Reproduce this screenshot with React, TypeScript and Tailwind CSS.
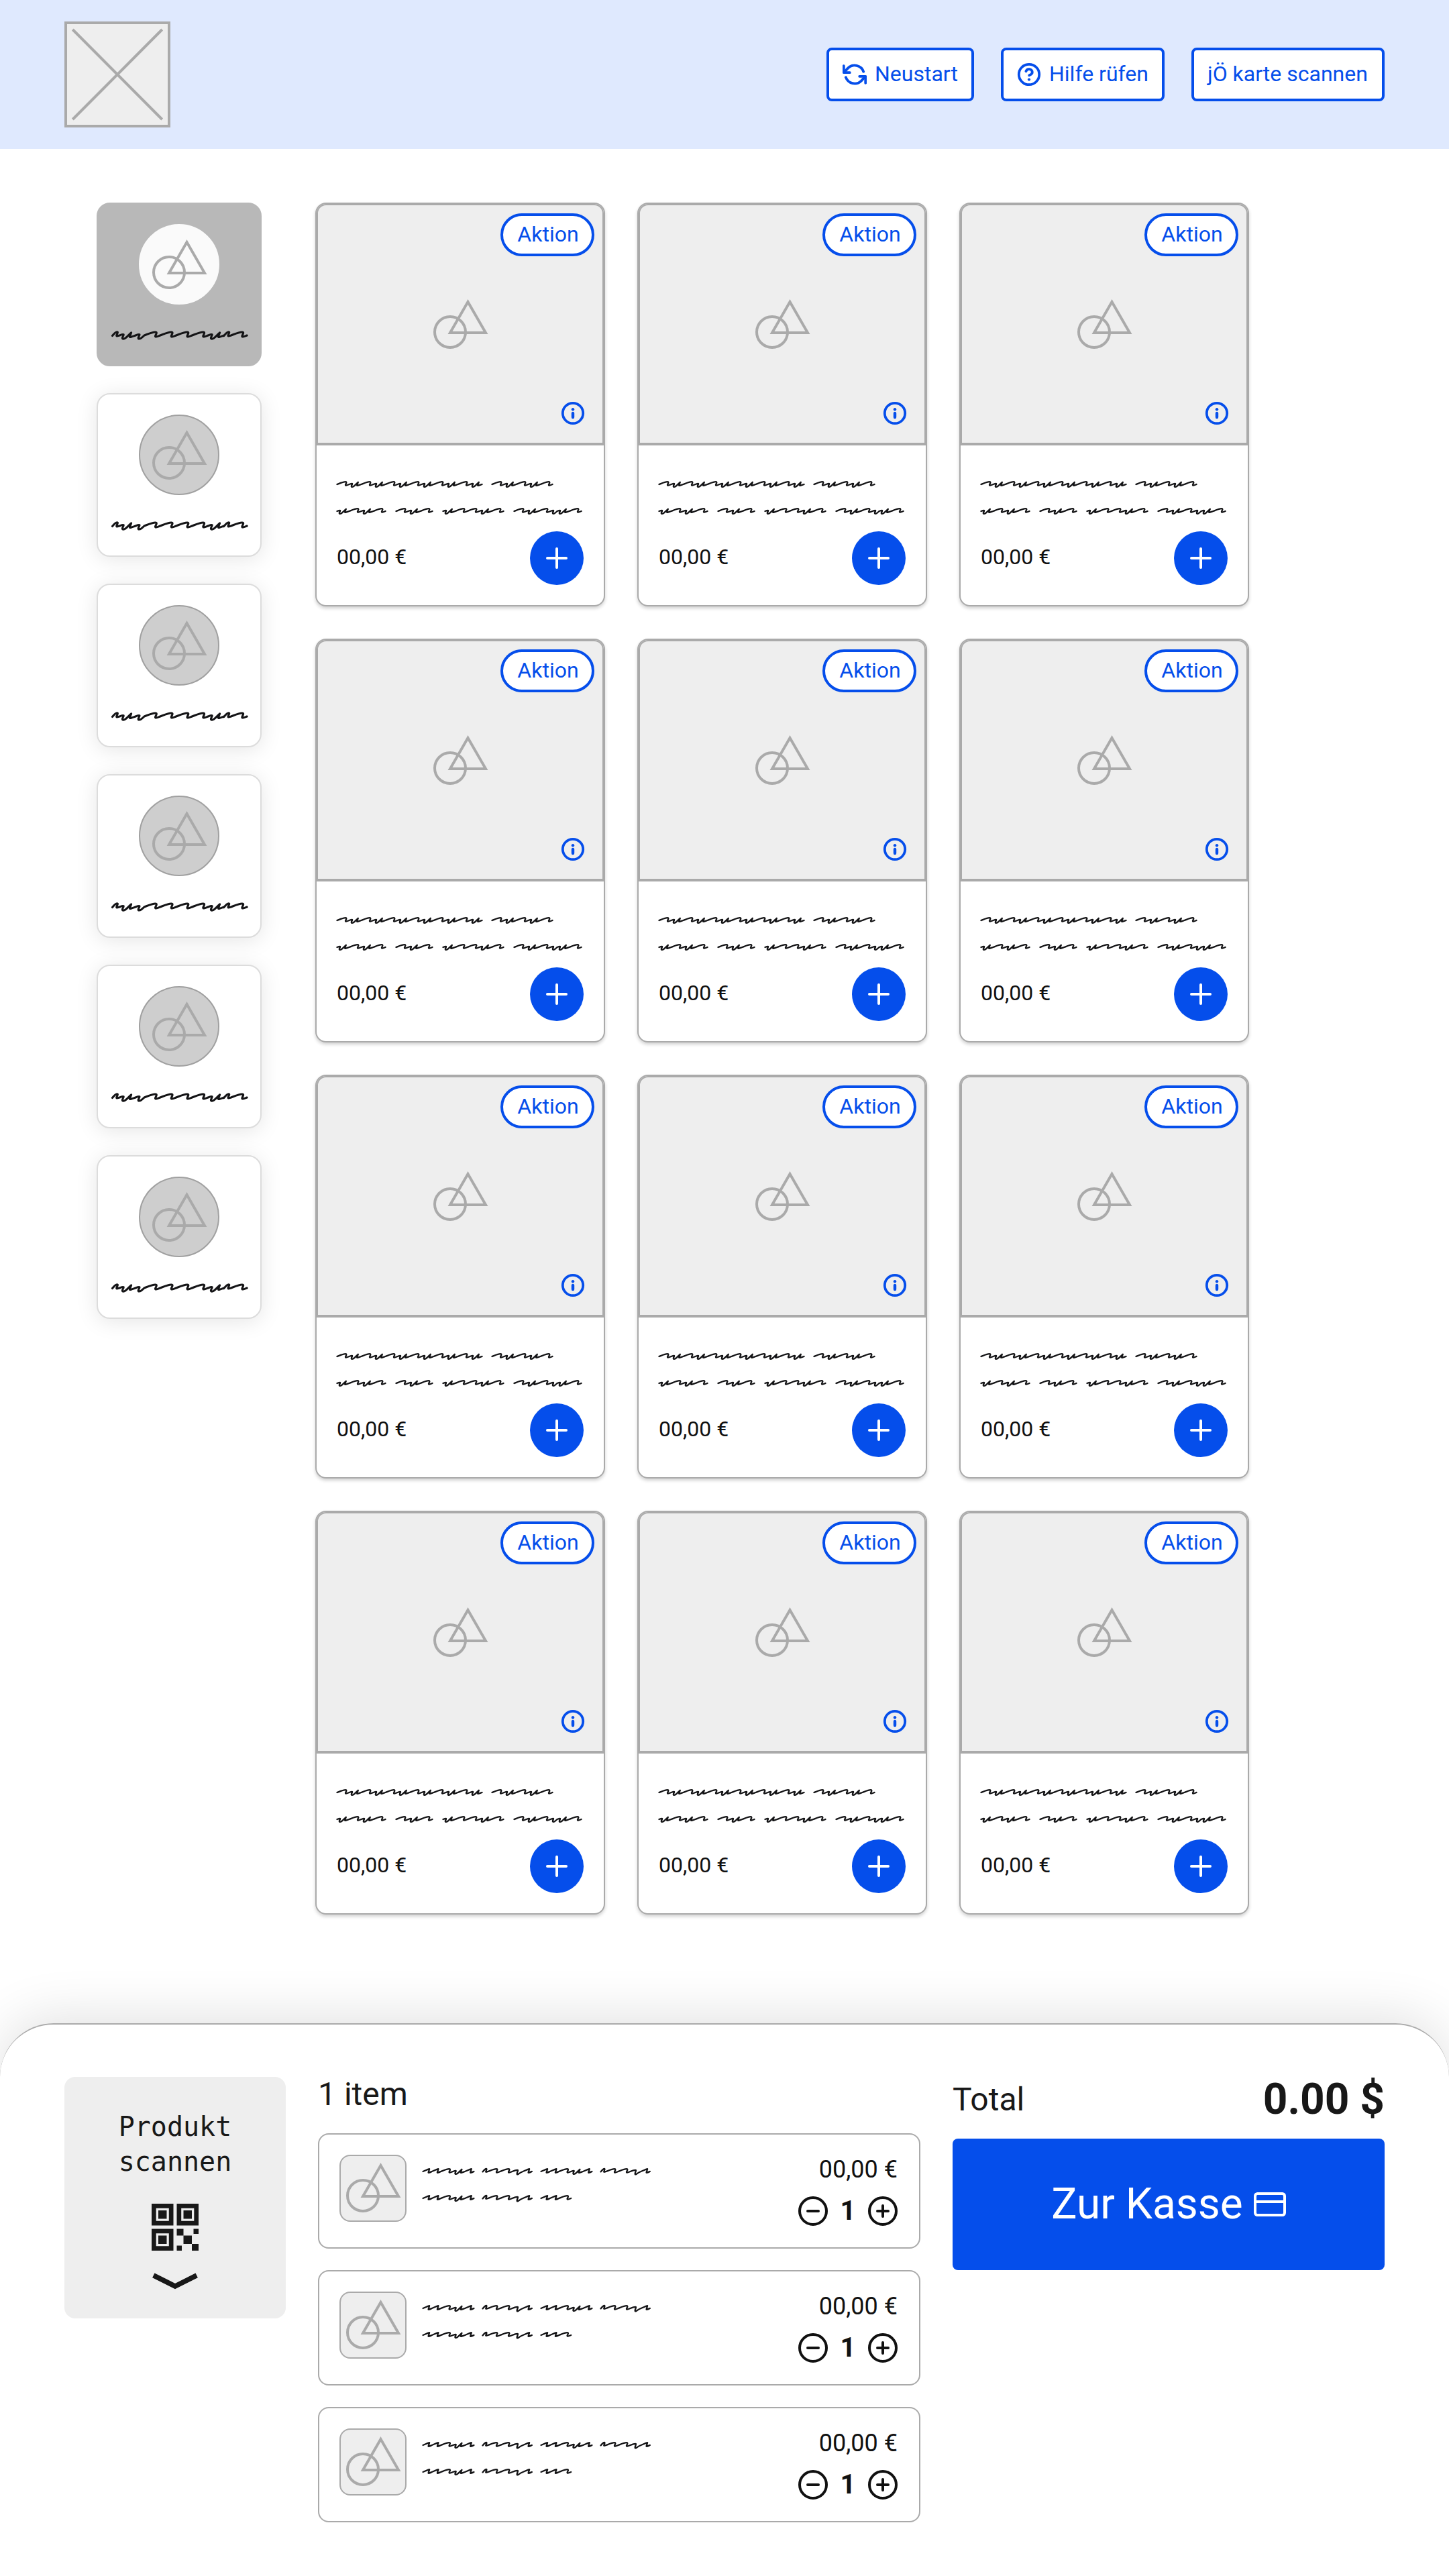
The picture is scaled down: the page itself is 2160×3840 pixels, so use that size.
import clsx from "clsx";

// Pen strokes for the placeholder handwriting, every stroke ends on the line it started from
const strokes: Record<string, string> = {
  n: "c4,-1.5 9,-3.8 12.5,-3.8 c2,0 1.4,1.6 .6,3 c-.8,1.6 -1,2.4 .3,2.3 c1.5,-.1 3,-.9 4.6,-1.5",
  u: "c2,-.7 4,-1.5 4.6,-1 c.5,.5 -1.2,2.4 -1.3,3.8 c0,1.6 1.8,1.3 3.4,.2 c2.4,-1.7 4.4,-4.2 6.6,-6.2 c-.6,1.8 -1.4,3.4 -1.6,4.6 c-.1,1.2 2,.2 6.3,-1.4",
  i: "c2,-.7 4,-1.5 4.6,-1 c.5,.5 -1.2,2.4 -1.3,3.8 c0,1.4 1.6,1.2 3.2,.2 c1.2,-.8 2.5,-2 3.5,-3",
  z: "c3,-1 6.5,-3 9.6,-3.8 c-.4,2 -1.3,3.8 -1.5,5.4 c-.1,.8 2,-.2 5.2,-1.6",
  r: "m0,.4 c1.8,-2.2 3.8,-4.6 5.4,-4.4 c1.4,.2 -.2,2.4 -.6,3.8 c-.3,1.4 .6,1 3.2,.2",
  d: "c3,-1.2 7,-2.8 8.4,-2 c.6,1 -1.2,3 -1.2,5.4 c0,1.8 1.6,1 3,-.2 c1.8,-1.4 3.6,-2.4 5.8,-3.2",
};

type Word = [number, string];

type ScribbleProps = {
  lines: Word[][];
  width: number;
  scale?: number;
  stroke?: number;
};

const Scribble = ({ lines, width, scale = 1, stroke = 2.3 }: ScribbleProps) => {
  const height = lines.length * 40;
  return (
    <svg
      width={width}
      height={height}
      viewBox={`0 0 ${width} ${height}`}
      className="shrink-0 overflow-visible"
      fill="none"
      stroke="#141416"
      strokeWidth={stroke / scale}
      strokeLinecap="round"
      strokeLinejoin="round"
    >
      {lines.map((words, row) => (
        <g key={row} transform={`translate(1.5 ${row * 40 + 20}) scale(${scale})`}>
          {words.map(([x, letters]) => (
            <path key={x} d={`M${x},0 ` + letters.split("").map((l) => strokes[l]).join(" ")} />
          ))}
        </g>
      ))}
    </svg>
  );
};

const Shapes = () => (
  <svg width="80" height="74" viewBox="0 0 80 74" className="overflow-visible" fill="none" stroke="#aaaaaa" strokeWidth="4">
    <circle cx="25" cy="49" r="23" />
    <path d="M25 50H78L51.5 4Z" />
  </svg>
);

const RefreshIcon = () => (
  <svg width="36" height="36" viewBox="0 0 36 36" fill="none" stroke="currentColor" strokeWidth="3.8" strokeLinecap="round" strokeLinejoin="round">
    <path d="M1.8 5.2V15.2H10.8" />
    <path d="M2.4 14.6L8.2 8.4A14 14 0 0 1 31.2 13.8" />
    <path d="M34.2 30.8V20.8H25.2" />
    <path d="M33.6 21.4L27.8 27.6A14 14 0 0 1 4.8 22.2" />
  </svg>
);

const HelpIcon = () => (
  <svg width="36" height="36" viewBox="0 0 36 36" fill="none" stroke="currentColor" strokeWidth="3.8" strokeLinecap="round" strokeLinejoin="round">
    <circle cx="18" cy="18" r="15.2" />
    <path d="M13.4 13.2C14.3 10.9 16.4 9.8 18.6 10.1C21 10.4 22.8 12.3 22.8 14.5C22.8 17.6 18.2 19.3 18.2 19.3" />
    <circle cx="18" cy="25.6" r="2.1" fill="currentColor" stroke="none" />
  </svg>
);

const InfoIcon = () => (
  <svg width="36" height="36" viewBox="0 0 36 36" fill="none" stroke="currentColor" strokeWidth="3.8" strokeLinecap="round">
    <circle cx="18" cy="18" r="15.2" />
    <path d="M18 18V24" strokeWidth="4.4" />
    <circle cx="18" cy="12.2" r="2.2" fill="currentColor" stroke="none" />
  </svg>
);

const QrIcon = () => (
  <svg width="70" height="70" viewBox="0 0 70 70" fill="#181818">
    {[[0, 0], [37.5, 0], [0, 37.5]].map(([x, y]) => (
      <g key={`${x}-${y}`} transform={`translate(${x} ${y})`}>
        <path fillRule="evenodd" d="M0 0H32.5V32.5H0ZM6.7 6.7V25.8H25.8V6.7Z" />
        <path d="M10 10H22.5V22.5H10Z" />
      </g>
    ))}
    <path d="M37.5 37.5H47.5V47.5H37.5ZM47.5 47.5H60V60H47.5ZM62.5 37.5H70V45H62.5ZM37.5 62.5H45V70H37.5ZM60 60H70V70H60Z" />
  </svg>
);

type HeaderButtonProps = {
  icon?: React.ReactNode;
  className?: string;
  children: React.ReactNode;
};

const HeaderButton = ({ icon, className, children }: HeaderButtonProps) => (
  <button
    className={clsx(
      "flex h-20 items-center gap-3 rounded-lg border-4 border-[#054eeb] bg-white pl-5 text-[32px] leading-10 whitespace-nowrap text-[#054eeb]",
      className
    )}
  >
    {icon}
    <span className="-mt-0.5">{children}</span>
  </button>
);

const Header = () => (
  <header className="flex h-[222px] shrink-0 items-center justify-between bg-[#dfe9fe] px-24">
    <div className="size-[158px] border-4 border-[#aaaaaa] bg-[#eeeeee]">
      <svg viewBox="0 0 150 150" stroke="#aaaaaa" strokeWidth="4">
        <path d="M8.3 8L141.7 142M141.7 8L8.3 142" />
      </svg>
    </div>
    <div className="flex gap-10">
      <HeaderButton className="w-[220px]" icon={<RefreshIcon />}>Neustart</HeaderButton>
      <HeaderButton className="w-[244px]" icon={<HelpIcon />}>Hilfe rüfen</HeaderButton>
      <HeaderButton className="w-[288px]">jÖ karte scannen</HeaderButton>
    </div>
  </header>
);

const Category = ({ active }: { active: boolean }) => (
  <div
    className={clsx(
      "flex h-[244px] w-[246px] flex-col items-center rounded-[20px] border-2 pt-[30px]",
      active ? "border-[#b8b8b8] bg-[#b8b8b8]" : "border-[#dcdcdc] bg-white shadow-[0_4px_32px_rgba(0,0,0,0.1)]"
    )}
  >
    <div
      className={clsx(
        "mb-[26px] flex size-[120px] items-center justify-center rounded-full border-2",
        active ? "border-[#fafafa] bg-[#fafafa]" : "border-[#a0a0a0] bg-[#cecece]"
      )}
    >
      <Shapes />
    </div>
    <Scribble width={202} scale={1.32} stroke={3.1} lines={[[[0, "ruinnnnurn"]]]} />
  </div>
);

const ProductCard = () => (
  <div className="h-[602px] w-[432px] rounded-2xl border-2 border-[#aaaaaa] bg-white shadow-[0_3px_5px_rgba(0,0,0,0.18)]">
    <div className="relative flex h-[360px] items-center justify-center rounded-t-[14px] border-2 border-b-4 border-[#aaaaaa] bg-[#eeeeee]">
      <Shapes />
      <span className="absolute top-3 right-3 flex h-16 w-[140px] items-center justify-center rounded-full border-4 border-[#054eeb] bg-white text-[32px] leading-10 text-[#054eeb]">
        <span className="-mt-0.5 ml-0.5">Aktion</span>
      </span>
      <span className="absolute right-[26px] bottom-[26px] text-[#054eeb]">
        <InfoIcon />
      </span>
    </div>
    <div className="px-[29px] pt-[38px]">
      <Scribble
        width={370}
        lines={[
          [[0, "nunununununu"], [231, "nunun"]],
          [[0, "unun"], [88, "nun"], [158, "unnun"], [264, "nuniun"]],
        ]}
      />
      <div className="mt-2.5 flex h-20 items-center justify-between pr-px pl-px">
        <span className="-mt-1 text-[32px] leading-10 text-[#111111]">00,00 €</span>
        <button className="flex size-20 items-center justify-center rounded-full bg-[#054eeb]">
          <svg width="32" height="32" viewBox="0 0 32 32" stroke="white" strokeWidth="4" strokeLinecap="round">
            <path d="M16 2V30M2 16H30" />
          </svg>
        </button>
      </div>
    </div>
  </div>
);

const CartItem = () => (
  <div className="flex h-[172px] rounded-2xl border-2 border-[#aaaaaa] bg-white py-[30px] pr-8 pl-[30px]">
    <div className="size-[100px] shrink-0 rounded-2xl border-2 border-[#aaaaaa] bg-[#eeeeee] pt-2.5 pl-2">
      <Shapes />
    </div>
    <div className="mt-[5px] ml-[23px] flex-1">
      <Scribble
        width={340}
        lines={[
          [[0, "zznuz"], [89, "rnndz"], [176, "zznuz"], [265, "rnndz"]],
          [[0, "zznuz"], [89, "rnndz"], [176, "zzn"]],
        ]}
      />
    </div>
    <div className="flex flex-col items-end text-[#111111]">
      <span className="text-[36px] leading-[44px]">00,00 €</span>
      <div className="mt-[18px] flex items-center">
        <svg width="44" height="44" viewBox="0 0 44 44" fill="none" stroke="currentColor" strokeWidth="4" strokeLinecap="round">
          <circle cx="22" cy="22" r="20" />
          <path d="M14 22H30" />
        </svg>
        <span className="w-[60px] text-center text-[40px] leading-[44px] font-bold">1</span>
        <svg width="44" height="44" viewBox="0 0 44 44" fill="none" stroke="currentColor" strokeWidth="4" strokeLinecap="round">
          <circle cx="22" cy="22" r="20" />
          <path d="M14 22H30M22 14V30" />
        </svg>
      </div>
    </div>
  </div>
);

const Cart = () => (
  <footer className="flex h-[824px] shrink-0 items-start gap-12 rounded-t-[80px] border-t-2 border-[#aaaaaa] bg-white px-24 pt-[78px] shadow-[0_-8px_80px_rgba(0,0,0,0.12)]">
    {/* SCAN */}
    <div className="flex h-[360px] w-[330px] flex-col items-center rounded-2xl bg-[#eeeeee] pt-12">
      <p className="text-center font-['DejaVu_Sans_Mono',monospace] text-[40px] leading-[52px]">
        Produkt
        <br />
        scannen
      </p>
      <div className="mt-[37px]">
        <QrIcon />
      </div>
      <svg className="mt-[31px]" width="70" height="28" viewBox="0 0 70 28" fill="none" stroke="#181818" strokeWidth="7.5">
        <path d="M2.8 5.8L35 22L67.2 5.8" />
      </svg>
    </div>
    {/* ITEMS */}
    <div className="w-[898px]">
      <h2 className="mb-8 text-5xl leading-[52px]">1 item</h2>
      <div className="flex flex-col gap-8">
        <CartItem />
        <CartItem />
        <CartItem />
      </div>
    </div>
    {/* CHECKOUT */}
    <div className="w-[644px]">
      <div className="mb-6 flex h-[68px] items-center justify-between">
        <span className="text-5xl leading-[68px]">Total</span>
        <span className="text-[64px] leading-[68px] font-bold">0.00 $</span>
      </div>
      <button className="flex h-[196px] w-full items-center justify-center gap-4 rounded-lg bg-[#054eeb] text-[64px] leading-[76px] text-white">
        <span>Zur Kasse</span>
        <svg width="48" height="36" viewBox="0 0 48 36" fill="none" stroke="currentColor" strokeWidth="4">
          <rect x="2" y="2" width="44" height="32" rx="3.5" />
          <path d="M2 14H46" />
        </svg>
      </button>
    </div>
  </footer>
);

const App = () => {
  return (
    <div className="flex h-[3840px] w-[2160px] flex-col overflow-hidden bg-white font-[Roboto,sans-serif] text-[#181818]">
      <Header />
      <main className="flex flex-1 items-start gap-20 pt-20 pl-36">
        <aside className="flex flex-col gap-10">
          {Array.from({ length: 6 }, (_, i) => (
            <Category key={i} active={i === 0} />
          ))}
        </aside>
        <section className="grid grid-cols-3 gap-12">
          {Array.from({ length: 12 }, (_, i) => (
            <ProductCard key={i} />
          ))}
        </section>
      </main>
      <Cart />
    </div>
  );
};

export default App;
